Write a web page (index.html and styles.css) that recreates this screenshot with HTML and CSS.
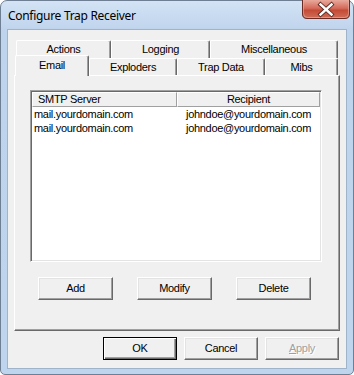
FILE: index.html
```html
<!DOCTYPE html>
<html>
<head>
  <meta charset="utf-8">
  <title>Configure Trap Receiver</title>
  <link rel="stylesheet" href="styles.css">
</head>
<body>
<div class="window">
  <div class="titlebar">
    <span class="title">Configure Trap Receiver</span>
    <div class="close">
      <svg width="48" height="19" viewBox="0 0 48 19">
        <defs>
          <linearGradient id="red" x1="0" y1="0" x2="0" y2="1">
            <stop offset="0" stop-color="#e9a99b"/>
            <stop offset="0.45" stop-color="#d46a5a"/>
            <stop offset="0.55" stop-color="#c44a35"/>
            <stop offset="1" stop-color="#d0705a"/>
          </linearGradient>
        </defs>
        <path d="M0.5 0 V14 Q0.5 18.5 5 18.5 H43 Q47.5 18.5 47.5 14 V0" fill="url(#red)" stroke="#6b2b22"/>
        <path d="M1.5 0 V13.5 Q1.5 17.5 5.5 17.5 H42.5 Q46.5 17.5 46.5 13.5 V0" fill="none" stroke="#eab0a4" stroke-opacity="0.6"/>
        <path d="M18.5 4.5 L29.5 14.5 M29.5 4.5 L18.5 14.5" stroke="#5a2a22" stroke-width="4.2" stroke-linecap="square"/>
        <path d="M18.5 4.5 L29.5 14.5 M29.5 4.5 L18.5 14.5" stroke="#ffffff" stroke-width="2.4" stroke-linecap="square"/>
      </svg>
    </div>
  </div>
  <div class="client">
    <div class="tabs">
      <div class="tab-row back">
        <div class="tab t-actions">Actions</div>
        <div class="tab t-logging">Logging</div>
        <div class="tab t-misc">Miscellaneous</div>
      </div>
      <div class="tab-row front">
        <div class="tab active t-email">Email</div>
        <div class="tab t-exploders">Exploders</div>
        <div class="tab t-trap">Trap Data</div>
        <div class="tab t-mibs">Mibs</div>
      </div>
    </div>
    <div class="panel">
      <div class="listview">
        <div class="lv-header">
          <div class="lv-col1">SMTP Server</div>
          <div class="lv-col2">Recipient</div>
        </div>
        <div class="lv-row">
          <div class="lv-col1">mail.yourdomain.com</div>
          <div class="lv-col2">johndoe@yourdomain.com</div>
        </div>
        <div class="lv-row">
          <div class="lv-col1">mail.yourdomain.com</div>
          <div class="lv-col2">johndoe@yourdomain.com</div>
        </div>
      </div>
      <div class="panel-buttons">
        <div class="btn">Add</div>
        <div class="btn">Modify</div>
        <div class="btn">Delete</div>
      </div>
    </div>
    <div class="dialog-buttons">
      <div class="btn default">OK</div>
      <div class="btn">Cancel</div>
      <div class="btn disabled"><u>A</u>pply</div>
    </div>
  </div>
</div>
</body>
</html>
```

FILE: styles.css
```css
*{
  margin: 0;
  padding: 0;
  box-sizing: border-box;
}
body{
  background: #ffffff;
  font-family: "Liberation Sans", Arial, sans-serif;
  font-size: 11px;
  letter-spacing: -0.3px;
  color: #000;
}
.window{
  width: 354px;
  height: 375px;
  border: 1px solid #6f7f93;
  border-radius: 7px 7px 5px 5px;
  background: linear-gradient(#d3e3f5, #bed3ec 30px, #bfd4ed);
  padding: 0 6px 5px 6px;
}
.titlebar{
  height: 28px;
  display: flex;
  justify-content: space-between;
  align-items: flex-start;
}
.title{
  font-family: "Noto Sans", "Open Sans", sans-serif;
  font-size: 12px;
  letter-spacing: -0.3px;
  margin-top: 6px;
  margin-left: 1px;
  color: #000;
}
.close{
  width: 48px;
  height: 19px;
  margin-top: -1px;
  margin-right: -3px;
}
.close svg{
  display: block;
}
.client{
  height: 340px;
  border: 1px solid #9fb3cb;
  background: #f0f0f0;
  padding: 10px 6px 0 6px;
}

/* tabs */
.tab-row{
  display: flex;
  align-items: flex-end;
  padding-left: 2px;
}
.tab-row.back{
  height: 18px;
}
.tab-row.front{
  height: 17px;
}
.tab{
  height: 100%;
  line-height: 16px;
  text-align: center;
  background: #f0f0f0;
  border-top: 1px solid #fff;
  border-left: 1px solid #fff;
  border-right: 1px solid #696969;
  box-shadow: inset -1px 0 #a0a0a0;
  border-radius: 2px 2px 0 0;
}
.t-actions{ width: 95px; }
.t-logging{ width: 99px; }
.t-misc{ width: 128px; }
.t-email{ width: 74px; }
.t-exploders{ width: 88px; }
.t-trap{ width: 88px; }
.t-mibs{ width: 73px; }
.tab.active{
  height: 21px;
  margin-left: -1px;
  margin-bottom: -1px;
  position: relative;
  z-index: 1;
  line-height: 18px;
}

/* page */
.panel{
  width: 326px;
  height: 256px;
  border-top: 1px solid #fff;
  border-left: 1px solid #fff;
  border-right: 1px solid #696969;
  border-bottom: 1px solid #696969;
  box-shadow: inset -1px -1px #a0a0a0;
  padding: 14px 0 0 15px;
}
.listview{
  width: 292px;
  height: 172px;
  background: #fff;
  border-top: 1px solid #a0a0a0;
  border-left: 1px solid #a0a0a0;
  border-right: 1px solid #fff;
  border-bottom: 1px solid #fff;
  box-shadow: inset 1px 1px #696969, inset -1px -1px #e3e3e3;
  padding: 1px;
}
.lv-header{
  display: flex;
  height: 15px;
  line-height: 13px;
}
.lv-header div{
  background: #f0f0f0;
  border-top: 1px solid #fff;
  border-left: 1px solid #fff;
  border-right: 1px solid #a0a0a0;
  border-bottom: 1px solid #a0a0a0;
}
.lv-col1{
  width: 145px;
  padding-left: 2px;
}
.lv-col2{
  flex: 1;
  text-align: center;
}
.lv-header .lv-col1{
  padding-left: 5px;
}
.lv-row{
  display: flex;
  height: 14px;
  line-height: 13px;
}
.lv-header + .lv-row{
  margin-top: 1px;
}

/* buttons */
.panel-buttons{
  display: flex;
  gap: 24px;
  margin-top: 15px;
  margin-left: 8px;
}
.btn{
  width: 75px;
  height: 23px;
  line-height: 20px;
  text-align: center;
  background: #f0f0f0;
  border-top: 1px solid #fff;
  border-left: 1px solid #fff;
  border-right: 1px solid #696969;
  border-bottom: 1px solid #696969;
  box-shadow: inset -1px -1px #a0a0a0, inset 1px 1px #e3e3e3;
}
.dialog-buttons{
  display: flex;
  justify-content: flex-end;
  gap: 7px;
  margin-top: 6px;
  padding-right: 1px;
}
.dialog-buttons .btn{
  width: 74px;
}
.btn.default{
  border: 1px solid #000;
  box-shadow: inset 1px 1px #fff, inset -1px -1px #696969, inset -2px -2px #a0a0a0;
}
.btn.disabled{
  color: #a0a0a0;
  text-shadow: 1px 1px #fff;
}
```
